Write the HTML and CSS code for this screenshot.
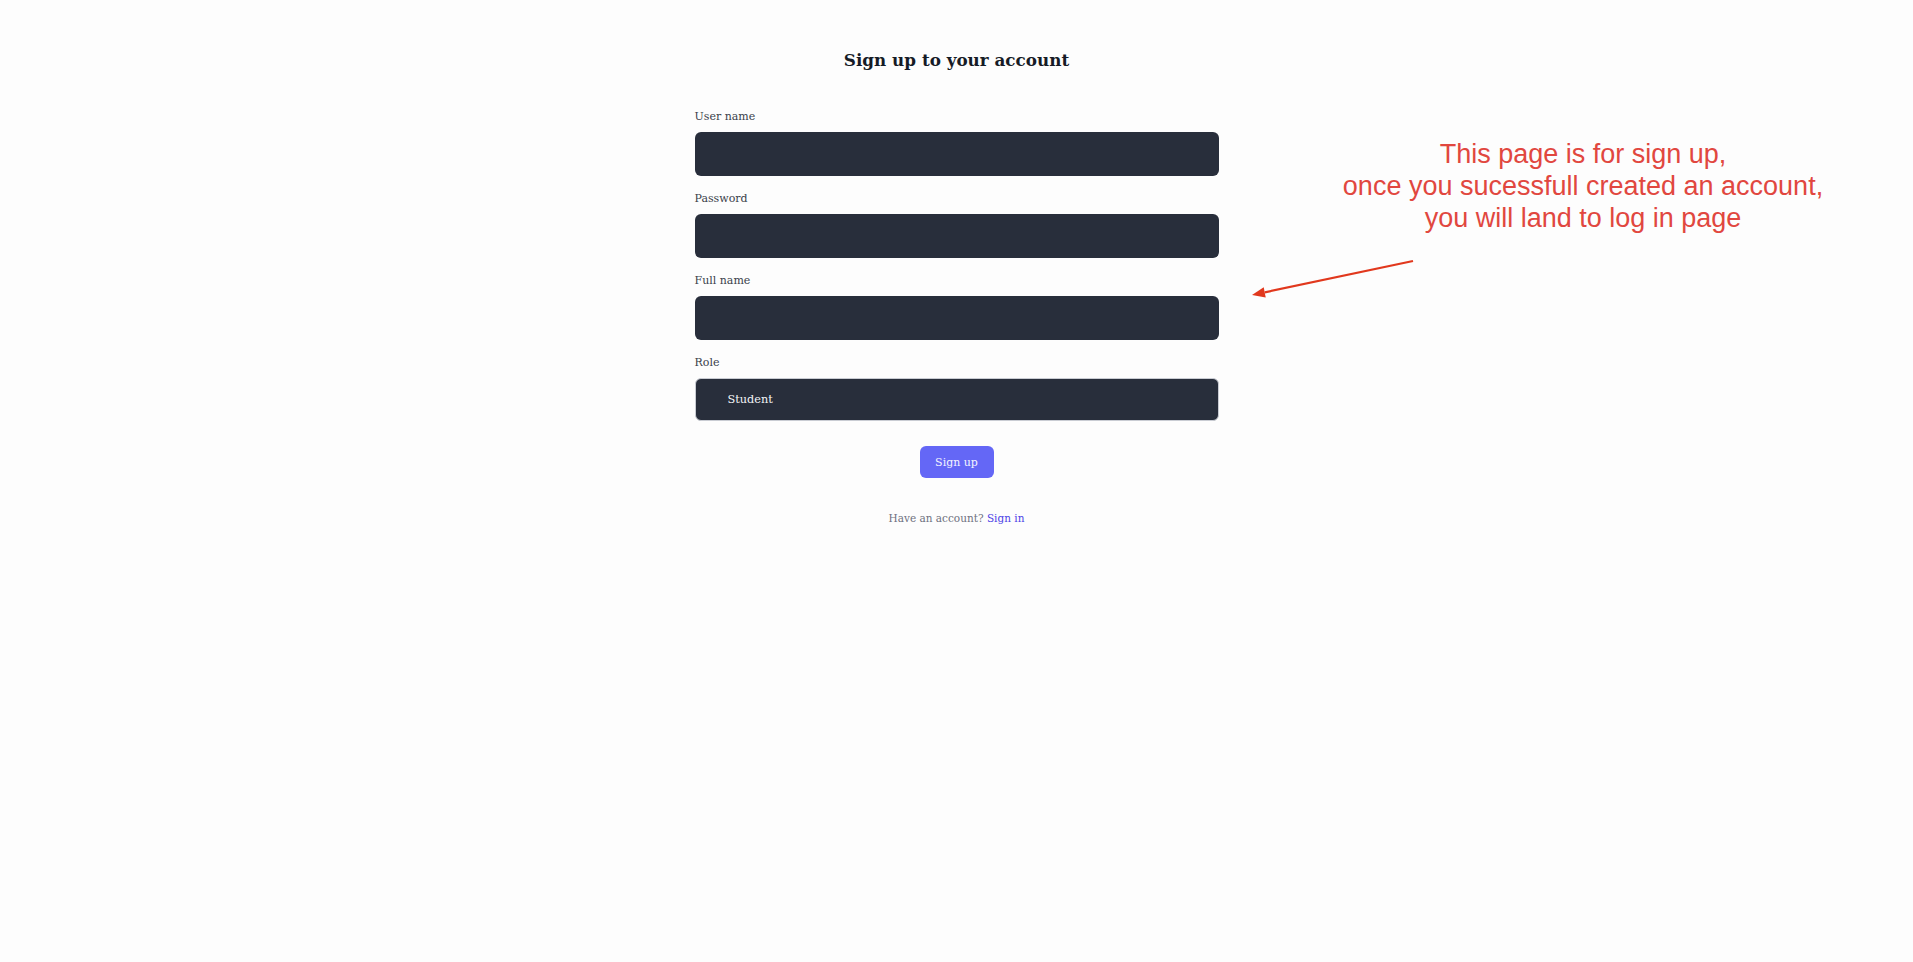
FILE: index.html
```html
<!DOCTYPE html>
<html lang="en">
<head>
<meta charset="utf-8">
<title>Sign up</title>
<link rel="stylesheet" href="styles.css">
</head>
<body>
<main class="page">
  <h1 class="title">Sign up to your account</h1>
  <form class="form">
    <div class="field">
      <label class="label" for="username">User name</label>
      <input class="input" id="username" type="text">
    </div>
    <div class="field">
      <label class="label" for="password">Password</label>
      <input class="input" id="password" type="password">
    </div>
    <div class="field">
      <label class="label" for="fullname">Full name</label>
      <input class="input" id="fullname" type="text">
    </div>
    <div class="field">
      <label class="label" for="role">Role</label>
      <div class="select" id="role"><span class="select-value">Student</span></div>
    </div>
    <div class="actions">
      <button class="button" type="button">Sign up</button>
    </div>
    <p class="switch">Have an account? <a class="link" href="#">Sign in</a></p>
  </form>
</main>
<div class="note">
  <p class="note-text">This page is for sign up,<br> once you sucessfull created an account,<br>you will land to log in page</p>
</div>
<svg class="arrow" width="180" height="60" viewBox="0 0 180 60">
  <line x1="165" y1="6" x2="16.7" y2="37.3" stroke="#e1381d" stroke-width="2.2"/>
  <polygon points="4,40 17.7,42.4 15.7,32.2" fill="#e1381d"/>
</svg>
</body>
</html>
```
FILE: styles.css
```css
html, body {
  margin: 0;
  padding: 0;
}
body {
  background: #fdfdfd;
  font-family: "DejaVu Serif", "Liberation Serif", serif;
  color: #1f2430;
  min-height: 962px;
  position: relative;
}
.page {
  display: flex;
  flex-direction: column;
  align-items: center;
  padding-top: 46px;
}
.title {
  margin: 0;
  font-size: 16.8px;
  line-height: 28px;
  font-weight: 700;
  color: #161b26;
}
.form {
  width: 524px;
  margin-top: 34px;
  display: flex;
  flex-direction: column;
}
.field {
  display: flex;
  flex-direction: column;
  gap: 7px;
  margin-bottom: 14px;
}
.label {
  padding-top: 1px;
  font-size: 11px;
  line-height: 16px;
  color: #3a3f4a;
}
.input {
  box-sizing: border-box;
  height: 44px;
  border: 0;
  border-radius: 6px;
  background: #282e3b;
  margin: 0;
  padding: 0 12px;
  color: #fff;
  font: inherit;
}
.select {
  box-sizing: border-box;
  height: 43px;
  border: 1px solid #c9ccd3;
  border-radius: 6px;
  background: #282e3b;
  display: flex;
  align-items: center;
  padding-left: 32px;
}
.select-value {
  color: #f4f5f7;
  font-size: 11.3px;
}
.actions {
  display: flex;
  justify-content: center;
  margin-top: 11px;
}
.button {
  width: 74px;
  height: 32px;
  border: 0;
  border-radius: 6px;
  background: #6467f6;
  color: #f4f4ff;
  font-family: inherit;
  font-size: 11px;
  padding: 0;
}
.switch {
  margin: 32px 0 0;
  text-align: center;
  font-size: 10.5px;
  line-height: 16px;
  color: #6e7180;
}
.link {
  color: #4c43e6;
  text-decoration: none;
}
.note {
  position: absolute;
  left: 1283px;
  top: 138px;
  width: 600px;
}
.note-text {
  margin: 0;
  text-align: center;
  font-family: "Liberation Sans", Arial, sans-serif;
  font-size: 27px;
  line-height: 32px;
  color: #e1473f;
}
.arrow {
  position: absolute;
  left: 1248px;
  top: 255px;
}
```
